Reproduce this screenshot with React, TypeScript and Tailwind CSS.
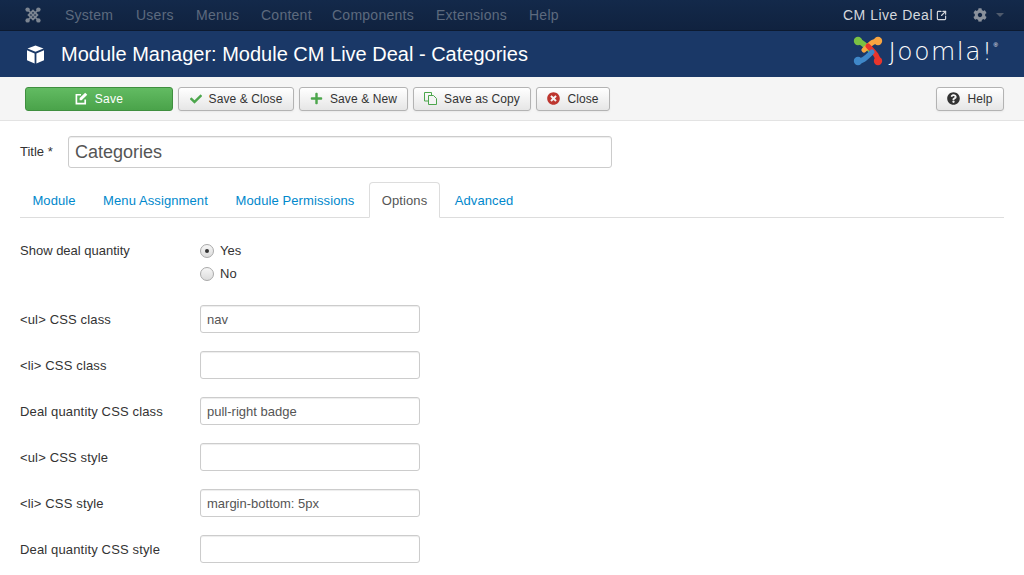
import React from "react";
import { SquareArrowOutUpRight } from "lucide-react";
import { FaCheck, FaCog, FaPlus, FaQuestionCircle, FaTimesCircle } from "react-icons/fa";

function JoomlaMark() {
  return (
    <svg width="30" height="30" viewBox="0 0 30 30" fill="none" strokeLinecap="round">
      <path d="M5 5 C9 6 12 9 19 16" stroke="#7ac143" strokeWidth="5.2" />
      <circle cx="5" cy="5" r="4.2" fill="#7ac143" />
      <path d="M25 5 C21 5 19 6 11 14" stroke="#f9a541" strokeWidth="5.2" />
      <circle cx="25" cy="5" r="4.2" fill="#f9a541" />
      <path d="M25 25 C25 21 23 18 15 10" stroke="#e8352c" strokeWidth="5.2" />
      <circle cx="25" cy="25" r="4.2" fill="#e8352c" />
      <path d="M5 25 C9 25 11 24 19 16" stroke="#3f87c8" strokeWidth="5.2" />
      <circle cx="5" cy="25" r="4.2" fill="#3f87c8" />
    </svg>
  );
}

function JoomlaSmall() {
  return (
    <svg width="16" height="16" viewBox="0 0 16 16" fill="none" stroke="#7c8591">
      <path d="M3 3 L13 13 M13 3 L3 13" strokeWidth="1.6" />
      <path d="M8 3.6 L12.4 8 L8 12.4 L3.6 8 Z" strokeWidth="1.8" />
      <g fill="#7c8591" stroke="none">
        <circle cx="2.6" cy="2.6" r="2.2" />
        <circle cx="13.4" cy="2.6" r="2.2" />
        <circle cx="2.6" cy="13.4" r="2.2" />
        <circle cx="13.4" cy="13.4" r="2.2" />
      </g>
    </svg>
  );
}

function ToolButton({ label, icon, className = "" }: { label: string; icon: React.ReactNode; className?: string }) {
  return (
    <button className={`h-[24px] flex items-center justify-center gap-[7px] rounded-[3px] border border-[#b3b3b3] bg-gradient-to-b from-white to-[#e6e6e6] text-[12px] tracking-[0.1px] text-[#333] shadow-[0_1px_2px_rgba(0,0,0,0.05)] ${className}`}>
      {icon}
      {label}
    </button>
  );
}

function TextField({ label, value = "" }: { label: string; value?: string }) {
  return (
    <div className="flex items-center h-[28px] mb-[18px]">
      <label className="w-[180px] pt-[2px] text-[13px] tracking-[0.15px] text-[#333]">{label}</label>
      <input
        readOnly
        value={value}
        className="w-[220px] h-[28px] px-[6px] rounded-[3px] border border-[#ccc] bg-white text-[13px] text-[#555] outline-none shadow-[inset_0_1px_1px_rgba(0,0,0,0.075)]"
      />
    </div>
  );
}

function Radio({ checked, label }: { checked?: boolean; label: string }) {
  return (
    <div className="flex items-center h-[23px]">
      <span className="w-[14px] h-[14px] rounded-full border border-[#a9a9a9] bg-gradient-to-b from-[#f6f6f6] to-[#dcdcdc] flex items-center justify-center">
        {checked && <span className="w-[4px] h-[4px] rounded-full bg-[#333]" />}
      </span>
      <span className="ml-[6px] text-[13px] text-[#333]">{label}</span>
    </div>
  );
}

export default function App() {
  const menu = [
    { label: "System", width: "w-[71px]" },
    { label: "Users", width: "w-[60px]" },
    { label: "Menus", width: "w-[65px]" },
    { label: "Content", width: "w-[71px]" },
    { label: "Components", width: "w-[104px]" },
    { label: "Extensions", width: "w-[93px]" },
    { label: "Help", width: "w-[40px]" },
  ];

  return (
    <div className="h-[575px] overflow-hidden bg-white font-['Liberation_Sans',Arial,sans-serif] text-[13px] text-[#333]">
      {/* top nav */}
      <div className="h-[31px] flex items-center bg-gradient-to-b from-[#13294a] to-[#10223f] border-b border-[#0c1a30]">
        <div className="ml-[25px]">
          <JoomlaSmall />
        </div>
        <div className="flex ml-[24px] text-[14px] tracking-[0.25px] text-[#5d6a7e]">
          {menu.map((m) => (
            <span key={m.label} className={m.width}>{m.label}</span>
          ))}
        </div>
        <div className="ml-auto flex items-center text-[14px] tracking-[0.5px] text-[#d5d8dd]">
          CM Live Deal
          <SquareArrowOutUpRight size={11} strokeWidth={2.5} className="ml-[3px]" />
          <FaCog size={14} className="ml-[26px] text-[#8a919c]" />
          <span className="ml-[9px] mr-[20px] w-0 h-0 border-x-[4px] border-x-transparent border-t-[4px] border-t-[#4f5a6c]" />
        </div>
      </div>

      {/* title bar */}
      <div className="h-[46px] flex items-center bg-[#1a3867] text-white">
        <svg className="ml-[26px]" width="19" height="19" viewBox="0 0 19 19" fill="#fff">
          <path d="M9.5 0.5 L17.5 3.5 L9.5 6.8 L1.5 3.5 Z" />
          <path d="M1 5.2 L8.6 8.4 V18.5 L1 15.2 Z" />
          <path d="M18 5.2 L10.4 8.4 V18.5 L18 15.2 Z" />
        </svg>
        <h1 className="ml-[16px] text-[20px] leading-none">Module Manager: Module CM Live Deal - Categories</h1>
        <div className="ml-auto mr-[26px] mb-[6px] flex items-center">
          <JoomlaMark />
          <span className="ml-[5px] text-[25px] leading-none font-extralight tracking-[1.5px] font-['DejaVu_Sans',sans-serif]">Joomla!</span>
          <span className="self-start mt-[6px] text-[6px] leading-none">®</span>
        </div>
      </div>

      {/* toolbar */}
      <div className="h-[44px] flex items-center gap-[5px] pl-[25px] pr-[20px] bg-[#f5f5f5] border-b border-[#e3e3e3]">
        <button className="w-[148px] h-[24px] flex items-center justify-center gap-[7px] rounded-[3px] border border-[#3f8f3f] bg-gradient-to-b from-[#62bb62] to-[#4aa34a] text-[12px] tracking-[0.3px] text-white">
          <svg width="13" height="13" viewBox="0 0 14 14" fill="none" stroke="#fff" strokeWidth="1.8">
            <path d="M11 8v4.5H1.5V3h5" />
            <path d="M5 6.5 L11 0.8 L13.2 3 L7.2 9 H5 Z" fill="#fff" stroke="none" />
          </svg>
          Save
        </button>
        <ToolButton label="Save & Close" className="w-[116px]" icon={<FaCheck size={12} className="text-[#4ca64c]" />} />
        <ToolButton label="Save & New" className="w-[109px]" icon={<FaPlus size={13} className="text-[#4ca64c]" />} />
        <ToolButton
          label="Save as Copy"
          className="w-[118px]"
          icon={
            <svg width="13" height="13" viewBox="0 0 13 13" fill="none" stroke="#4ca64c">
              <path d="M7.5 3.5 V0.5 H0.5 V9 H4.5" />
              <path d="M4.5 3.5 H9.5 L12.5 6.5 V12.5 H4.5 Z" fill="#f4f4f4" />
            </svg>
          }
        />
        <ToolButton label="Close" className="w-[74px]" icon={<FaTimesCircle size={13} className="text-[#bd362f]" />} />
        <ToolButton label="Help" className="w-[68px] ml-auto" icon={<FaQuestionCircle size={13} className="text-[#333]" />} />
      </div>

      {/* form */}
      <div className="px-[20px]">
        <div className="flex items-center h-[32px] mt-[15px]">
          <label className="w-[48px] text-[13px]">Title *</label>
          <input
            readOnly
            value="Categories"
            className="w-[544px] h-[32px] px-[6px] rounded-[3px] border border-[#ccc] bg-white text-[18px] text-[#555] outline-none shadow-[inset_0_1px_1px_rgba(0,0,0,0.075)]"
          />
        </div>

        <div className="flex mt-[14px] h-[36px] border-b border-[#ddd] text-[13px] tracking-[0.1px] text-[#0088cc]">
          <span className="w-[68px] mr-[2px] pt-[9px] text-center">Module</span>
          <span className="w-[131px] mr-[2px] pt-[9px] text-center">Menu Assignment</span>
          <span className="w-[144px] mr-[2px] pt-[9px] text-center">Module Permissions</span>
          <span className="w-[71px] h-[36px] pt-[8px] mr-[2px] text-center border border-[#ddd] border-b-white rounded-t-[4px] bg-white text-[#555]">Options</span>
          <span className="w-[84px] pt-[9px] text-center">Advanced</span>
        </div>

        <div className="flex mt-[21px] mb-[20px]">
          <label className="w-[180px] h-[23px] leading-[23px] text-[13px]">Show deal quantity</label>
          <div>
            <Radio checked label="Yes" />
            <Radio label="No" />
          </div>
        </div>

        <TextField label="<ul> CSS class" value="nav" />
        <TextField label="<li> CSS class" />
        <TextField label="Deal quantity CSS class" value="pull-right badge" />
        <TextField label="<ul> CSS style" />
        <TextField label="<li> CSS style" value="margin-bottom: 5px" />
        <TextField label="Deal quantity CSS style" />
      </div>
    </div>
  );
}
